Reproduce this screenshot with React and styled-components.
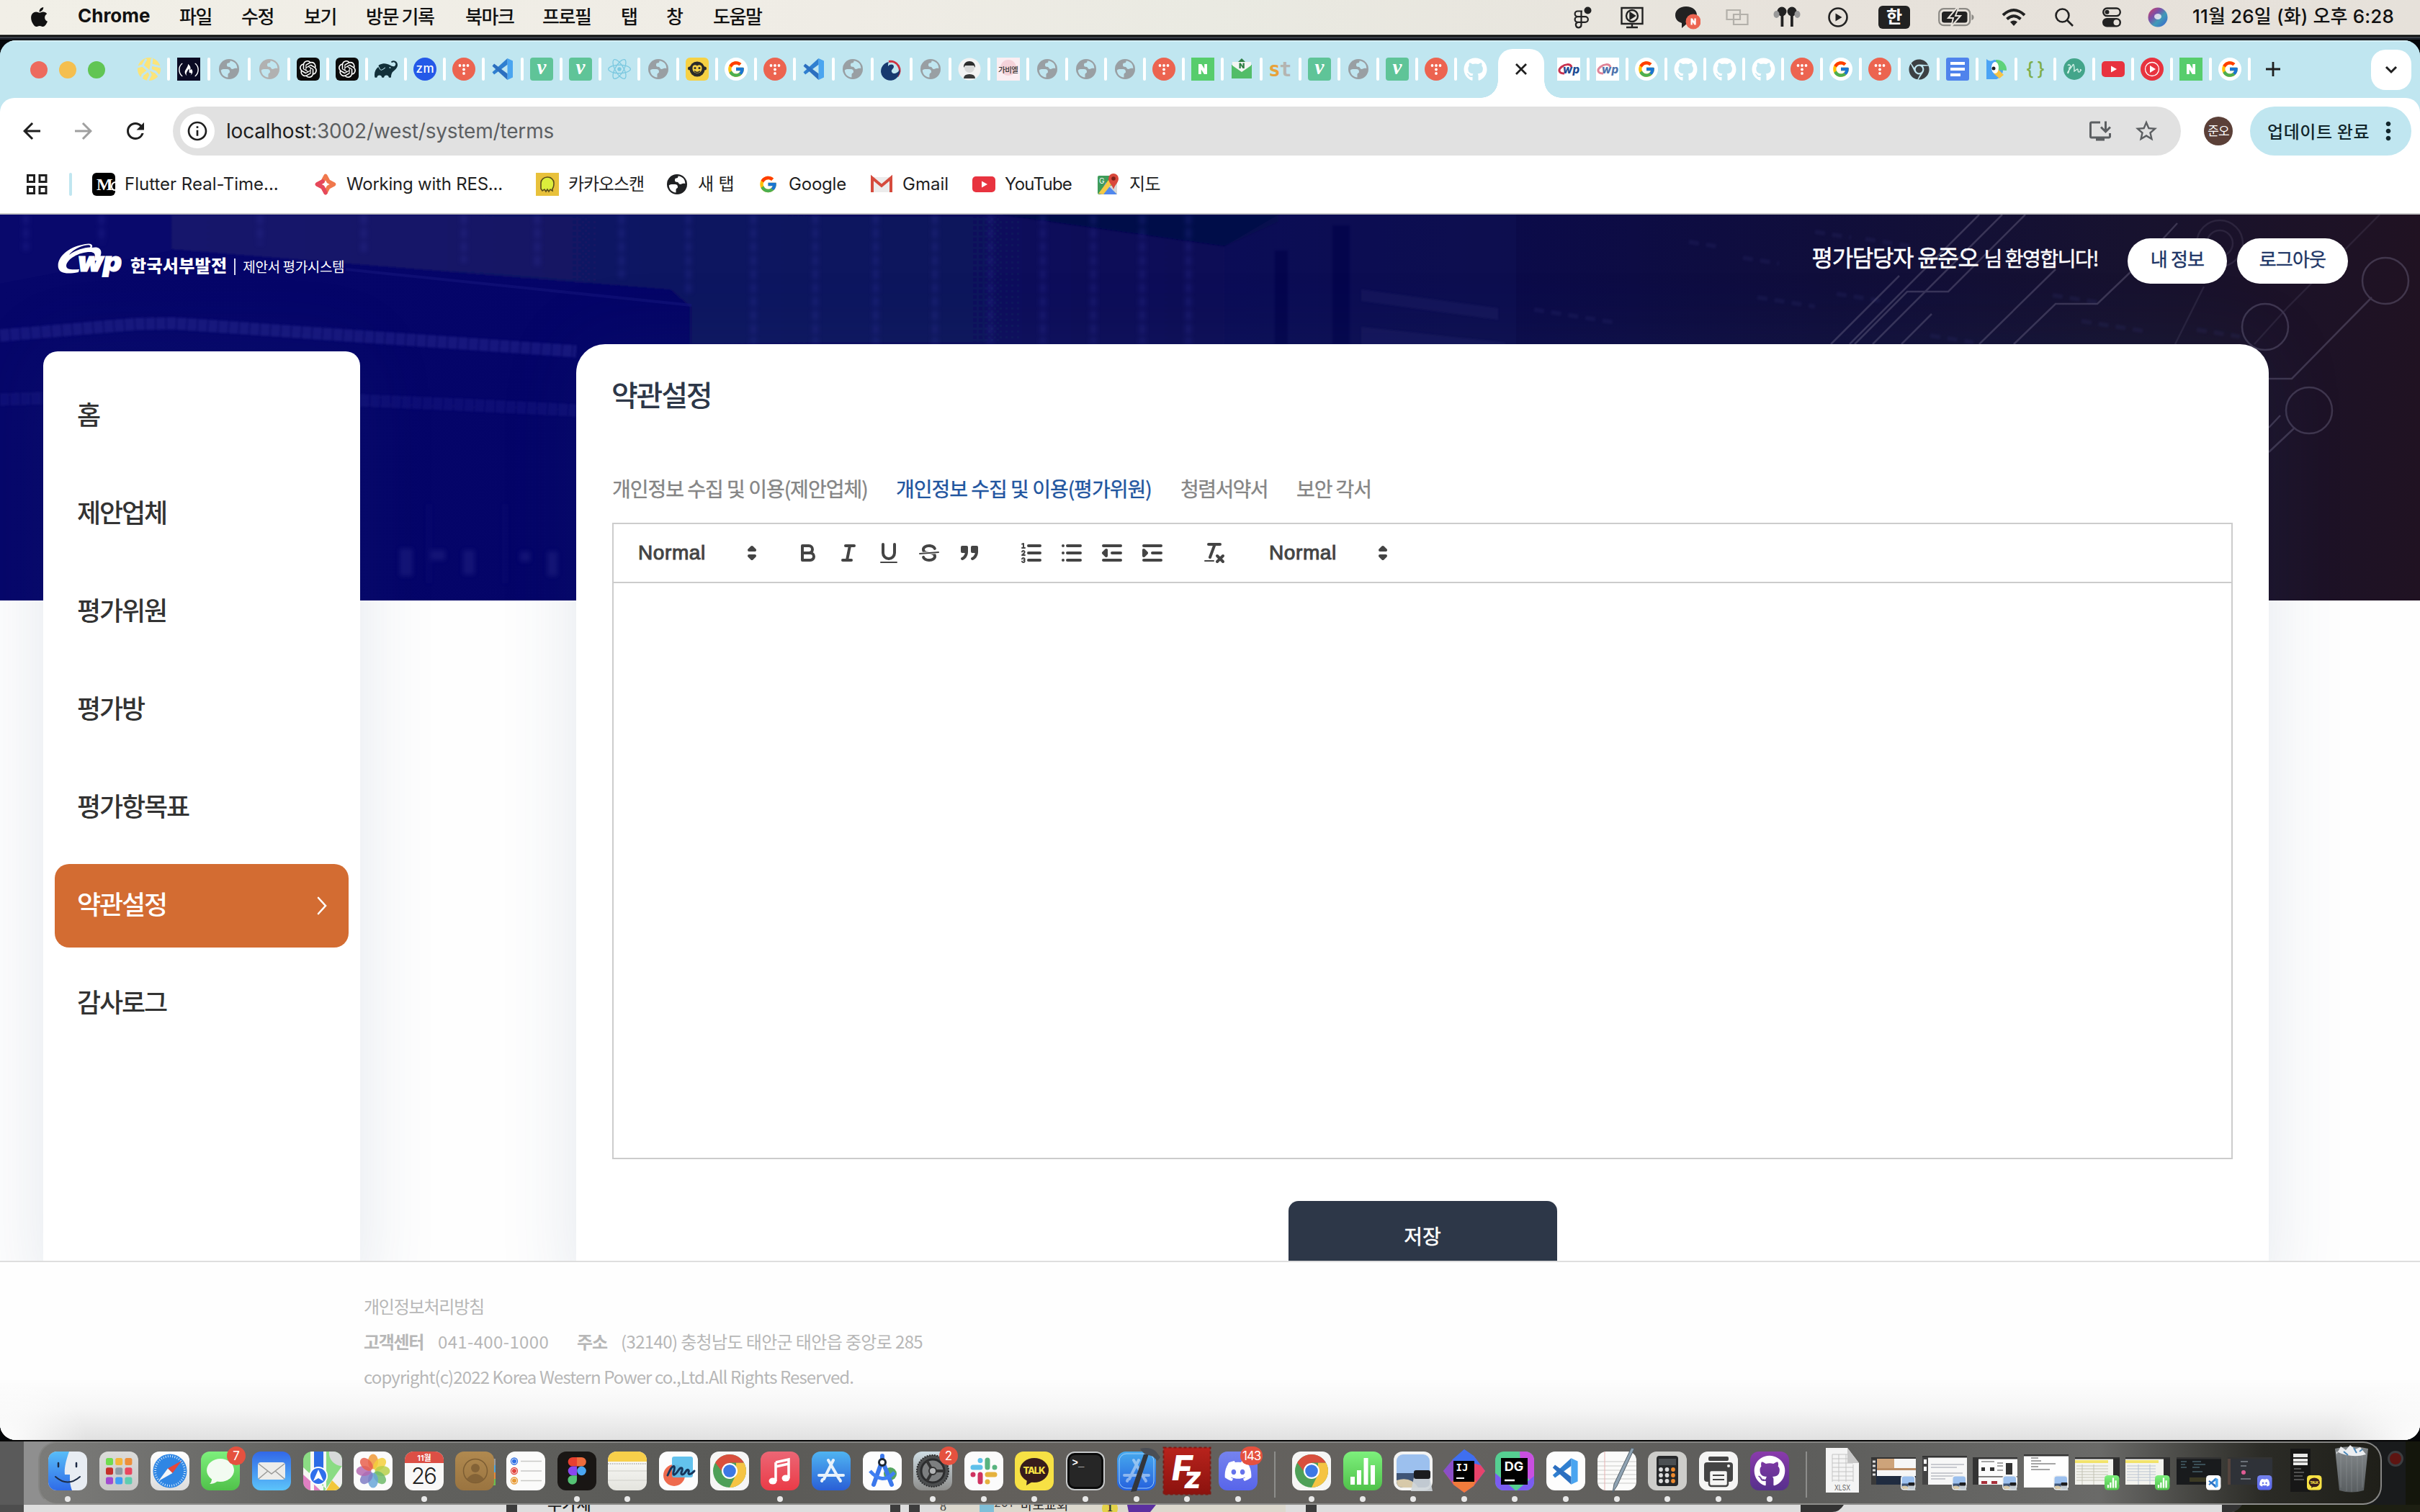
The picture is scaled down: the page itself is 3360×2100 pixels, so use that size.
import React from "react";
import styled, { createGlobalStyle } from "styled-components";
import { FaApple, FaGithub, FaReact, FaFreeCodeCamp, FaChrome, FaDiscord } from "react-icons/fa";
import { FcGoogle } from "react-icons/fc";
import { SiOpenai, SiGradle } from "react-icons/si";
import { MdArrowBack, MdArrowForward, MdRefresh, MdInfoOutline, MdStarBorder, MdOutlineInstallDesktop, MdMoreVert } from "react-icons/md";

const KR = '"Noto Sans CJK KR", sans-serif';
const UI = 'Inter, "Noto Sans CJK KR", sans-serif';

const GlobalStyle = createGlobalStyle`
  * { box-sizing: border-box; }
  body { margin: 0; width: 3360px; height: 2100px; overflow: hidden; background: #11151c; font-family: ${KR}; }
  svg { display: block; flex: none; }
`;

/* ───────────── desktop ───────────── */

const Desktop = styled.div`
  width: 3360px;
  height: 2100px;
  display: flex;
  flex-direction: column;
  background: #05070a;
`;

const MenuBar = styled.header`
  height: 48px;
  display: flex;
  align-items: center;
  justify-content: space-between;
  padding: 0 36px 0 39px;
  background: linear-gradient(90deg, #f1efe7 0%, #efece5 35%, #eaeae2 50%, #e7e2db 75%, #e6e1da 100%);
  color: #111;
`;

const MenuGroup = styled.div`
  display: flex;
  align-items: center;
`;

const MenuItem = styled.span`
  width: ${(p) => p.$w}px;
  white-space: nowrap;
  padding-bottom: ${(p) => (p.$icon ? 2 : 4)}px;
  font: ${(p) => (p.$bold ? 700 : 500)} 26px/44px ${(p) => (p.$bold ? UI : KR)};
  letter-spacing: ${(p) => (p.$bold ? 0 : "-1.4px")};
`;

const StatusCell = styled.div`
  display: flex;
  align-items: center;
  justify-content: center;
  width: ${(p) => p.$w}px;
  height: 40px;
  margin-left: ${(p) => p.$gap}px;
`;

const InputBadge = styled.div`
  width: 44px;
  height: 32px;
  border-radius: 6px;
  background: #222;
  color: #fff;
  text-align: center;
  font: 700 24px/28px ${KR};
`;

const Clock = styled.time`
  margin-left: 34px;
  width: 280px;
  padding-bottom: 3px;
  white-space: nowrap;
  text-align: right;
  font: 500 26px/44px ${UI};
  letter-spacing: 0.15px;
`;

const BehindEdge = styled.div`
  height: 8px;
  background: linear-gradient(180deg, #6b6f6b 0 1px, #050607 1px 3px, #565a5f 3px 4px, #20252e 4px 7px, #000 7px 8px);
`;

const WindowFrame = styled.main`
  height: 1944px;
  display: flex;
  flex-direction: column;
  border-radius: 22px;
  overflow: hidden;
  background: #c0e6f0;
`;

/* ───────────── browser tabs ───────────── */

const TabStrip = styled.div`
  height: 80px;
  display: flex;
  align-items: center;
  padding: 0 12px 0 42px;
  background: #c0e6f0;
  border-top: 2px solid #d3eef5;
`;

const TrafficLights = styled.div`
  display: flex;
  gap: 16px;
  width: 138px;
`;

const Light = styled.i`
  width: 24px;
  height: 24px;
  border-radius: 50%;
  background: ${(p) => p.$c};
`;

const Tab = styled.div`
  width: ${(p) => p.$w || 54}px;
  height: 32px;
  margin-bottom: 2px;
  display: flex;
  justify-content: center;
  align-items: center;
  position: relative;
  &::after {
    content: "";
    position: absolute;
    right: -2px;
    top: 0;
    width: 4px;
    height: 32px;
    border-radius: 2px;
    background: #fff;
    display: ${(p) => (p.$last ? "none" : "block")};
  }
`;

const ActiveTab = styled.div`
  width: 64px;
  height: 68px;
  margin: 0 7px 0 5px;
  align-self: flex-end;
  display: flex;
  justify-content: center;
  padding-top: 19px;
  border-radius: 20px 20px 0 0;
  background: #fff;
  position: relative;
  &::before, &::after {
    content: "";
    position: absolute;
    bottom: 0;
    width: 24px;
    height: 24px;
  }
  &::before { left: -24px; background: radial-gradient(circle at 0 0, transparent 23.5px, #fff 24px); }
  &::after { right: -24px; background: radial-gradient(circle at 100% 0, transparent 23.5px, #fff 24px); }
`;

const NewTab = styled.div`
  width: 66px;
  display: flex;
  justify-content: center;
  padding-bottom: 2px;
`;

const TabSearch = styled.button`
  margin-left: auto;
  width: 56px;
  height: 56px;
  padding: 0;
  border: 0;
  border-radius: 20px;
  background: #fff;
  display: flex;
  align-items: center;
  justify-content: center;
`;

/* ───────────── toolbar ───────────── */

const Chrome = styled.div`
  height: 162px;
  background: #fff;
  border-radius: 20px 20px 0 0;
  border-bottom: 2px solid #c9c9c9;
`;

const NavRow = styled.div`
  height: 92px;
  display: flex;
  align-items: center;
  padding: 0 12px 0 26px;
`;

const NavButton = styled.div`
  width: 36px;
  margin-right: 36px;
  display: flex;
  justify-content: center;
  color: ${(p) => (p.$off ? "#a0a0a0" : "#1f1f1f")};
`;

const Omnibox = styled.div`
  width: 2788px;
  height: 68px;
  margin-left: -2px;
  border-radius: 34px;
  background: #e1e1e1;
  display: flex;
  align-items: center;
  padding: 0 30px 0 10px;
`;

const SiteInfo = styled.div`
  width: 48px;
  height: 48px;
  border-radius: 50%;
  background: #fff;
  color: #1f1f1f;
  display: flex;
  align-items: center;
  justify-content: center;
`;

const Url = styled.div`
  flex: 1;
  margin-left: 16px;
  font: 400 28px/40px ${UI};
  letter-spacing: -0.18px;
  color: #5c5f62;
  b { font-weight: 400; color: #1f1f1f; }
`;

const OmniIcons = styled.div`
  display: flex;
  align-items: center;
  gap: 28px;
  color: #5c5f62;
`;

const Avatar = styled.div`
  width: 40px;
  height: 40px;
  margin-left: 32px;
  border-radius: 50%;
  background: #5b4038;
  color: #fff;
  text-align: center;
  font: 400 17px/37px ${KR};
  letter-spacing: -0.8px;
`;

const UpdatePill = styled.div`
  width: 224px;
  height: 68px;
  margin-left: 24px;
  padding: 0 12px 0 24px;
  border-radius: 34px;
  background: #c0e6f0;
  display: flex;
  align-items: center;
  justify-content: space-between;
  white-space: nowrap;
  font: 500 24px/64px ${KR};
  letter-spacing: 0.6px;
  color: #13272d;
`;

const BookmarkRow = styled.div`
  height: 56px;
  display: flex;
  align-items: center;
  padding-left: 37px;
  color: #1f1f1f;
`;

const BookmarkDivider = styled.i`
  width: 4px;
  height: 32px;
  margin: 0 28px 0 30px;
  border-radius: 2px;
  background: #c0e6f0;
`;

const Bookmark = styled.div`
  width: ${(p) => p.$w}px;
  display: flex;
  align-items: center;
  gap: 13px;
  white-space: nowrap;
  font: 400 24px/40px ${UI};
  letter-spacing: ${(p) => p.$ls || 0}px;
`;

/* ───────────── web page ───────────── */

const Page = styled.div`
  height: 1702px;
  position: relative;
  overflow: hidden;
  background: #fefefe;
  display: flex;
  flex-direction: column;
`;

const BannerArt = styled.svg`
  position: absolute;
  left: 0;
  top: 0;
`;

const PageHeader = styled.div`
  position: relative;
  z-index: 1;
  height: 180px;
  flex: none;
  display: flex;
  justify-content: space-between;
  align-items: flex-start;
  padding: 33px 100px 0 79px;
`;

const Brand = styled.div`
  display: flex;
  align-items: center;
  padding-top: 6px;
  color: #fff;
`;

const BrandName = styled.strong`
  margin-left: 12px;
  padding-top: 11px;
  font: 900 24px/40px ${KR};
  letter-spacing: 0.3px;
`;

const BrandRule = styled.i`
  width: 2px;
  height: 23px;
  margin: 16px 10px 0 10px;
  background: #d8d8ee;
`;

const BrandSub = styled.span`
  padding-top: 14px;
  font: 400 19px/30px ${KR};
  letter-spacing: -0.35px;
`;

const Account = styled.div`
  display: flex;
  align-items: center;
`;

const Welcome = styled.p`
  margin: 0 41px 0 0;
  padding-bottom: 11px;
  color: #fff;
  white-space: nowrap;
  font: 400 32px/48px ${KR};
  letter-spacing: -1.3px;
  -webkit-text-stroke: 0.5px #fff;
  small { font-size: 28px; letter-spacing: -1.43px; margin-left: 8px; }
`;

const PillButton = styled.button`
  width: ${(p) => p.$w}px;
  height: 63px;
  margin-left: ${(p) => p.$ml || 0}px;
  padding: 0 0 7px;
  border: 0;
  border-radius: 32px;
  background: #fff;
  color: #1d3566;
  font: 400 26px/40px ${KR};
  letter-spacing: -0.8px;
  -webkit-text-stroke: 0.4px #1d3566;
`;

const Body = styled.div`
  position: relative;
  height: 1273px;
  flex: none;
  display: flex;
  align-items: stretch;
`;

const softShadow = "0 0 110px rgba(50, 80, 120, 0.13)";

const Sidebar = styled.nav`
  width: 440px;
  margin: 10px 0 -60px 60px;
  padding: 32px 16px;
  border-radius: 20px 20px 0 0;
  background: #fff;
  box-shadow: ${softShadow};
  display: flex;
  flex-direction: column;
  gap: 20px;
`;

const SideItem = styled.a`
  height: 116px;
  padding: 0 29px 8px 31px;
  border-radius: 20px;
  display: flex;
  align-items: center;
  justify-content: space-between;
  background: ${(p) => (p.$on ? "#d36c32" : "transparent")};
  color: ${(p) => (p.$on ? "#fff" : "#333")};
  font: 500 36px/50px ${KR};
  letter-spacing: -2.1px;
  svg { margin-top: 6px; }
`;

const Panel = styled.section`
  width: 2350px;
  margin: 0 0 -60px 300px;
  padding: 39px 50px 0;
  border-radius: 40px 40px 0 0;
  background: #fff;
  box-shadow: ${softShadow};
  display: flex;
  flex-direction: column;
`;

const Title = styled.h1`
  margin: 0 0 0 -1px;
  font: 500 40px/60px ${KR};
  letter-spacing: -2.2px;
  color: #2d3748;
`;

const TermTabs = styled.div`
  display: flex;
  margin-top: 81px;
  height: 40px;
  gap: 40px;
`;

const TermTab = styled.span`
  width: ${(p) => p.$w}px;
  white-space: nowrap;
  font: 400 28px/40px ${KR};
  letter-spacing: ${(p) => p.$ls}px;
  color: ${(p) => (p.$on ? "#1f559f" : "#858585")};
  -webkit-text-stroke: 0.4px currentColor;
`;

const EditorBar = styled.div`
  height: 84px;
  margin-top: 28px;
  padding: 0 16px;
  border: 2px solid #ccc;
  display: flex;
  align-items: center;
`;

const EditorArea = styled.div`
  height: 800px;
  flex: none;
  border: 2px solid #ccc;
  border-top: 0;
`;

const ToolGroup = styled.div`
  display: flex;
  margin-right: 30px;
`;

const ToolButton = styled.span`
  width: 56px;
  display: flex;
  justify-content: center;
  svg { width: 36px; height: 36px; }
`;

const Picker = styled.span`
  width: 196px;
  display: flex;
  align-items: center;
  justify-content: space-between;
  padding: 0 2px 0 18px;
  color: #444;
  font: 400 28px/40px "Liberation Sans", sans-serif;
  letter-spacing: 0.6px;
  -webkit-text-stroke: 1px #444;
  svg { width: 36px; height: 36px; }
`;

const QuillSvg = styled.svg.attrs({ viewBox: "0 0 18 18", width: 36, height: 36 })`
  fill: none;
  stroke: #444;
  stroke-width: 2;
  stroke-linecap: round;
  stroke-linejoin: round;
  .f { fill: #444; stroke: none; }
  .fs { fill: #444; }
  .t { stroke-width: 1; }
`;

const SaveButton = styled.button`
  width: 373px;
  height: 100px;
  flex: none;
  align-self: center;
  margin-top: 58px;
  padding: 0 0 4px;
  border: 0;
  border-radius: 14px;
  background: #2d3748;
  color: #fff;
  font: 400 28px/40px ${KR};
  -webkit-text-stroke: 0.5px #fff;
`;

const Footer = styled.footer`
  position: relative;
  z-index: 2;
  flex: 1;
  border-top: 2px solid #dedede;
  padding: 36px 0 0 505px;
  color: #b7b7b7;
  background:
    radial-gradient(ellipse 120px 90px at 0 100%, #fff 0, rgba(255,255,255,0) 100%),
    radial-gradient(ellipse 120px 90px at 100% 100%, #fff 0, rgba(255,255,255,0) 100%),
    linear-gradient(180deg, rgba(0,0,0,0) 160px, rgba(0,0,0,0.035) 205px, rgba(0,0,0,0.12) 250px), #fefefe;
  font: 400 24px/49px ${KR};
`;

const FootLine = styled.div`
  display: flex;
  height: 49px;
`;

const FootText = styled.span`
  width: ${(p) => p.$w || 700}px;
  white-space: nowrap;
  font-weight: ${(p) => (p.$bold ? 700 : 400)};
  letter-spacing: ${(p) => p.$ls}px;
`;

/* ───────────── dock ───────────── */

const DockZone = styled.div`
  height: 100px;
  border-top: 2px solid #060606;
  display: flex;
  flex-direction: column;
  background: linear-gradient(90deg, #5a5a5a 0 33px, #8f8f8f 33px 80px, #6a6a6a 80px 3250px, #191b1c 3250px 3340px, #14160c 3340px);
`;

const Dock = styled.div`
  width: 3254px;
  height: 88px;
  margin-left: 53px;
  padding: 0 5px 0 4px;
  border-radius: 26px;
  border: 2px solid #858583;
  border-bottom-color: #8d8d8b;
  background: linear-gradient(90deg, #7b7b79 0%, #62625f 12%, #5a5a57 30%, #625f5b 40%, #64625f 60%, #5d5d5b 75%, #6a6a68 88%, #2b2b26 95%, #1f1f19 100%);
  display: flex;
`;

const DockItem = styled.div`
  width: ${(p) => p.$w || 70.68}px;
  display: flex;
  flex-direction: column;
  align-items: center;
  position: relative;
  padding-top: 12px;
  svg { overflow: visible; }
  &::after {
    content: "";
    margin-top: 8px;
    width: 8px;
    height: 8px;
    border-radius: 50%;
    background: ${(p) => (p.$run ? "#e8e8e8" : "transparent")};
  }
`;

const DockBadge = styled.span`
  position: absolute;
  top: 5px;
  right: 1px;
  min-width: 26px;
  height: 26px;
  padding: 0 3px;
  border-radius: 13px;
  background: #e5513f;
  color: #fff;
  text-align: center;
  font: 400 17px/26px ${UI};
  letter-spacing: -1px;
`;

const DockRule = styled.i`
  width: 2px;
  height: 64px;
  margin: 12px 14.6px 0;
  background: #8d8d8b;
`;

const Knob = styled.i`
  position: absolute;
  left: 3315px;
  top: 2015px;
  width: 22px;
  height: 22px;
  border-radius: 50%;
  border: 3px solid #3b3d40;
  background: #5e1512;
`;

/* ───────────── favicons ───────────── */

const Svg = ({ s = 32, vb = 32, children }) => (
  <svg width={s} height={s} viewBox={`0 0 ${vb} ${vb}`}>{children}</svg>
);

const WhiteDisc = styled.span`
  width: 32px;
  height: 32px;
  border-radius: 50%;
  background: #fff;
  display: flex;
  align-items: center;
  justify-content: center;
`;

const VsMark = () => (
  <g>
    <path d="M22.5 1 30 4.5v23L22.5 31Z" fill="#4aa5f0" />
    <path d="M22.5 1 1.5 20.2l2.6 3.2L22.5 9.8Z" fill="#2f7fd0" />
    <path d="M22.5 31 1.5 11.8l2.6-3.2L22.5 22.2Z" fill="#2b6fc0" />
  </g>
);

const Cwp = ({ ring = "#c8324f", text = "#1f4c93", w = 32 }) => (
  <svg width={w} height={w} viewBox="0 0 32 32">
    <rect width="32" height="32" fill="#fff" />
    <path d="M10 22C2 22 1 17 6 13S18 8 20 13" fill="none" stroke={ring} strokeWidth="3" />
    <text x="8" y="22" fontFamily="Inter" fontWeight="800" fontStyle="italic" fontSize="15" textLength="23" fill={text}>wp</text>
  </svg>
);

const Globe = ({ c, bg = "#c0e6f0" }) => (
  <Svg>
    <circle cx="16" cy="16" r="14" fill={c} />
    <path d="M4.800 17.500C6.500 15.500 10 16 13 16c3 0 4 1.500 4 4 0 1.500-2.500 1.500-2.500 3.500v4C9 27 5 23 4.800 17.500Z" fill={bg} />
    <path d="M17.500 4.600c0 2-.5 2.900-2.500 2.900-2 0-2 1.500-2 3s1 2.300 3 2.300c2.500 0 2 3.200 4.500 3.200 2 0 2-2 6.800-1C27.500 9 23 5 17.500 4.600Z" fill={bg} />
  </Svg>
);

const favicons = {
  yellow: () => <Svg><circle cx="16" cy="16" r="16" fill="#fbe47a" /><path d="M12 2 7 11l-7 2M7 11l8 7-8 6-2 6M15 18l3 6-4 8M20 1l-1 9 13 3M19 10l-1 7 7 3 5 6" fill="none" stroke="#c0e6f0" strokeWidth="3" /></Svg>,
  fcc: () => <Svg><rect width="32" height="32" fill="#0a0a23" /><g transform="translate(2 3)"><FaFreeCodeCamp size={28} color="#fff" /></g></Svg>,
  globe: () => <Globe c="#999fa3" />,
  globeLight: () => <Globe c="#b1b1b1" />,
  gpt: () => <Svg><rect width="32" height="32" rx="6" fill="#0c0c0c" /><g transform="translate(4 4)"><SiOpenai size={24} color="#fff" /></g></Svg>,
  gradle: () => <SiGradle size={32} color="#12303a" />,
  zoom: () => <Svg><circle cx="16" cy="16" r="16" fill="#2459e8" /><text x="16" y="21" textAnchor="middle" fontFamily="Inter" fontWeight="500" fontSize="17" textLength="25" fill="#fff">zm</text></Svg>,
  tistory: () => <Svg><circle cx="16" cy="16" r="16" fill="#ec6450" />{[[10.5, 11], [16, 11], [21.5, 11], [16, 16.5], [16, 22]].map(([x, y]) => <circle key={x + y} cx={x} cy={y} r="1.9" fill="#fff" />)}</Svg>,
  vscode: () => <Svg><VsMark /></Svg>,
  velog: () => <Svg><rect width="32" height="32" rx="4" fill="#5fc498" /><text x="16" y="23" textAnchor="middle" fontFamily="Liberation Serif" fontStyle="italic" fontWeight="700" fontSize="29" fill="#fff">v</text></Svg>,
  react: () => <FaReact size={32} color="#7cc9e0" />,
  monkey: () => <Svg><rect width="32" height="32" rx="6" fill="#f6d144" /><circle cx="16" cy="16" r="10.500" fill="#2b2b2b" /><circle cx="5.500" cy="15" r="2.500" fill="#2b2b2b" /><circle cx="26.500" cy="15" r="2.500" fill="#2b2b2b" /><path d="M9.500 14c0-5 6.500-4 6.500-2 0-2 6.500-3 6.500 2 1 10-14 10-13 0Z" fill="#f6d144" /><circle cx="13" cy="14.500" r="1.500" fill="#2b2b2b" /><circle cx="19" cy="14.500" r="1.500" fill="#2b2b2b" /><path d="M12 18.500q4 4 8 0" stroke="#2b2b2b" strokeWidth="1.500" fill="none" /></Svg>,
  google: () => <WhiteDisc><FcGoogle size={26} /></WhiteDisc>,
  gov: () => <Svg><path d="M12 5.500A12.500 12.500 0 0 1 24 26" fill="none" stroke="#cf3140" strokeWidth="3" /><path d="M12 6A13 13 0 1 0 26 24c1-2 2-5 1-8-1 5-8 8-10.500 4.500C14 17 19 16 19 12.500c0-3.500-5-4-8-.5 0-2 0-4 1-6Z" fill="#17396f" /></Svg>,
  face: () => <Svg><circle cx="16" cy="16" r="15.500" fill="#f3f3f3" /><circle cx="16" cy="14" r="7" fill="#d9d9d9" /><path d="M8 14C7 2 25 2 24 14l-2-3H10Z" fill="#2c2c2c" /><path d="M8 29q0-6 8-6t8 6" fill="#3a3a3a" /></Svg>,
  gabia: () => <Svg><rect width="32" height="32" fill="#fbeef2" /><circle cx="16" cy="14" r="11" fill="#f5d3da" /><text x="16" y="21" textAnchor="middle" fontFamily="Noto Sans CJK KR" fontWeight="500" fontSize="10.500" textLength="28" fill="#333">가비엘</text></Svg>,
  naver: () => <Svg><rect width="32" height="32" fill="#57cd6c" /><path d="M10 23V9h4.200l4 6.600V9H22v14h-4.200l-4-6.600V23Z" fill="#fff" /></Svg>,
  mail: () => <Svg><path d="M2 10h28v19H2Z" fill="#52bd68" /><path d="M9 8l7-7 7 7Z" fill="#2f8044" /><path d="M3 6h26v5L16 20 3 11Z" fill="#f3f5f3" /><path d="M12.500 15V7.500h2.300l2.700 4.300V7.500h2.300V15h-2.300l-2.700-4.300V15Z" fill="#2f8044" /></Svg>,
  st: () => <Svg><text x="-1" y="26" fontFamily="DejaVu Sans Mono" fontWeight="700" fontSize="28" fill="#e7a23a">s</text><text x="14.500" y="26" fontFamily="DejaVu Sans Mono" fontWeight="700" fontSize="28" fill="#b4b4b0">t</text></Svg>,
  github: () => <FaGithub size={33} color="#fff" />,
  cwp: () => <Cwp />,
  cwpLight: () => <Cwp ring="#e08397" text="#4f74ad" />,
  chrome: () => <FaChrome size={29} color="#3c4043" />,
  docs: () => <Svg><rect width="32" height="32" rx="3" fill="#4f83ec" /><path d="M6 8h20M6 16h20M6 24h14" stroke="#fff" strokeWidth="4" /></Svg>,
  bird: () => <Svg><path d="M2 2q5 5 11 1a14 14 0 0 1 3 27H2Z" fill="#4aa3f5" /><path d="M15 3a14 14 0 0 1 15 15l-13-1Z" fill="#5ed27a" /><path d="M16 14l10 10-6 5-8-7Z" fill="#f6c445" /><ellipse cx="14" cy="14" rx="5" ry="8" fill="#fff" /><circle cx="12" cy="15" r="2.500" fill="#222" /></Svg>,
  braces: () => <Svg><text x="16" y="25" textAnchor="middle" fontFamily="Inter" fontWeight="500" fontSize="26" textLength="27" fill="#7fae4c">{"{}"}</text></Svg>,
  mysql: () => <Svg><circle cx="16" cy="16" r="15" fill="#43a58a" /><path d="M7 11a2 2 0 1 1 2 3c0 8-3 9-2 6 2-4 6-7 7-10 2-3 2 8 2 9l4-3c2-1 0 5 3 4s0-6 3-2" fill="none" stroke="#d9f3ea" strokeWidth="1.300" /></Svg>,
  youtube: () => <Svg><rect y="5" width="32" height="22" rx="5" fill="#e8333f" /><path d="M13 11.500v9l8-4.500Z" fill="#fff" /></Svg>,
  ytmusic: () => <Svg><circle cx="16" cy="16" r="16" fill="#e8333f" /><circle cx="16" cy="16" r="9.500" fill="none" stroke="#fff" strokeWidth="1.300" /><path d="M13 11v10l8-5Z" fill="#fff" /></Svg>,
};

const Favicon = ({ kind }) => favicons[kind]();

const tabsBefore = "yellow fcc globe globeLight gpt gpt gradle zoom tistory vscode velog velog react globe monkey google tistory vscode globe gov globe face gabia globe globe globe tistory naver mail st velog globe velog tistory github".split(" ");
const tabsAfter = "cwp cwpLight google github github github tistory google tistory chrome docs bird braces mysql youtube ytmusic naver google".split(" ");
const firstWidths = [54, 56, 56, 55];

/* ───────────── status icons ───────────── */

const statusIcons = [
  [28, 0, <svg width="28" height="34" viewBox="0 0 28 34"><g fill="none" stroke="#222" strokeWidth="2.200"><path d="M14 8.500H7.500a3.800 3.800 0 0 0 0 7.700H18a3.800 3.800 0 1 1 0 7.700H7.500a3.800 3.800 0 0 1 0-7.700M7.500 23.900a3.800 3.800 0 1 0 5 3.700V8.500" /></g><circle cx="21.500" cy="7.500" r="5" fill="#222" /></svg>],
  [32, 39, <svg width="32" height="32" viewBox="0 0 32 32" fill="none" stroke="#222" strokeWidth="2.400"><path d="M1.500 3h29v22h-29ZM8 30h16M16 25v5" /><circle cx="16" cy="14" r="8" /><path d="M13.500 10v8l6-4Z" fill="#222" /></svg>],
  [36, 43, <svg width="36" height="34" viewBox="0 0 36 34"><path d="M16 2c9 0 15 5 15 12S25 26 17 26l-7 6 0-7C3 23 1 18 1 14 1 7 7 2 16 2Z" fill="#222" /><circle cx="26" cy="23" r="10.500" fill="#ec6450" /><path d="M22.500 27.500v-9h2.300l2.600 4.300v-4.300h2.300v9h-2.300l-2.600-4.300v4.300Z" fill="#fff" /></svg>],
  [32, 35, <svg width="32" height="26" viewBox="0 0 32 26" fill="none" stroke="#b3b0aa" strokeWidth="2.200"><path d="M1.500 3H20v13H1.500ZM11 9h19.500v14H11Z" /></svg>],
  [38, 34, <svg width="38" height="30" viewBox="0 0 38 30"><g fill="#222"><circle cx="12" cy="7" r="6.500" /><circle cx="26" cy="7" r="6.500" /><path d="M10.500 8h3.800v20h-3.800ZM24 8h3.800v20H24Z" /></g><ellipse cx="4.500" cy="11" rx="4" ry="5" fill="#999" /><ellipse cx="33.500" cy="11" rx="4" ry="5" fill="#999" /></svg>],
  [28, 38, <svg width="28" height="28" viewBox="0 0 28 28"><circle cx="14" cy="14" r="12.500" fill="none" stroke="#222" strokeWidth="2.600" /><path d="M10.500 8.500v11l9-5.500Z" fill="#222" /></svg>],
  [44, 42, <InputBadge>한</InputBadge>],
  [50, 39, <svg width="50" height="28" viewBox="0 0 50 28"><rect x="1.200" y="2.200" width="43" height="23" rx="6.500" fill="none" stroke="#8c8a85" strokeWidth="2.200" /><rect x="5" y="6" width="35.500" height="15.500" rx="3.500" fill="#222" /><path d="M46.500 10v8q3-1 3-4t-3-4Z" fill="#8c8a85" /><path d="M26 1 14 15h7l-3 12 13-15h-7l4-11Z" fill="#222" stroke="#e7e2db" strokeWidth="2" /></svg>],
  [34, 38, <svg width="34" height="26" viewBox="0 0 34 26" fill="none" stroke="#222" strokeWidth="4"><path d="M2 10q15-14 30 0M7.500 15.500q9.500-8.500 19 0" /><path d="M17 25l-5-5.500q5-4 10 0Z" fill="#222" stroke="none" /></svg>],
  [26, 40, <svg width="26" height="26" viewBox="0 0 26 26" fill="none" stroke="#222" strokeWidth="2.600"><circle cx="10.500" cy="10.500" r="9" /><path d="M17 17l8 8" /></svg>],
  [26, 40, <svg width="26" height="28" viewBox="0 0 26 28"><rect x="1.200" y="1.500" width="23.600" height="10.600" rx="5.300" fill="none" stroke="#222" strokeWidth="2.400" /><circle cx="6.500" cy="6.800" r="3" fill="#222" /><rect y="15" width="26" height="12.500" rx="6.200" fill="#222" /><circle cx="19.500" cy="21.200" r="4" fill="#e7e2db" /></svg>],
  [28, 37, <svg width="28" height="28" viewBox="0 0 28 28"><defs><linearGradient id="siri" x1="0" y1="0" x2="1" y2="1"><stop offset="0" stopColor="#d8405f" /><stop offset=".35" stopColor="#7a4fa8" /><stop offset=".6" stopColor="#3f9bb8" /><stop offset="1" stopColor="#3b5fd0" /></linearGradient></defs><circle cx="14" cy="14" r="13.500" fill="url(#siri)" /><ellipse cx="14" cy="13" rx="5" ry="4" fill="#fff" opacity=".75" /></svg>],
];

const menus = [["파일", 86], ["수정", 87], ["보기", 86], ["방문 기록", 138], ["북마크", 107], ["프로필", 109], ["탭", 63], ["창", 65], ["도움말", 80]];

/* ───────────── editor icons ───────────── */

const Line = ({ c, x1, x2, y1, y2 }) => <line className={c} x1={x1} x2={x2} y1={y1} y2={y2} />;

const quill = {
  bold: <><path d="M5,4H9.500A2.500,2.500,0,0,1,12,6.500v0A2.500,2.500,0,0,1,9.500,9H5Z" /><path d="M5,9h5.500A2.500,2.500,0,0,1,13,11.500v0A2.500,2.500,0,0,1,10.500,14H5Z" /></>,
  italic: <><Line x1={7} x2={13} y1={4} y2={4} /><Line x1={5} x2={11} y1={14} y2={14} /><Line x1={8} x2={10} y1={14} y2={4} /></>,
  underline: <><path d="M5,3V9a4.012,4.012,0,0,0,4,4H9a4.012,4.012,0,0,0,4-4V3" /><rect className="f" height="1" rx=".5" width="12" x="3" y="15" /></>,
  strike: <><Line c="t" x1={15.5} x2={2.5} y1={8.5} y2={9.5} /><path className="f" d="M9.007,8C6.542,7.791,6,7.519,6,6.500,6,5.792,7.283,5,9,5c1.571,0,2.765.679,2.969,1.309a1,1,0,0,0,1.900-.617C13.356,4.106,11.354,3,9,3,6.200,3,4,4.538,4,6.500a3.200,3.200,0,0,0,.5,1.843Z" /><path className="f" d="M8.984,10C11.457,10.208,12,10.479,12,11.500c0,.708-1.283,1.500-3,1.500-1.571,0-2.765-.679-2.969-1.309a1,1,0,1,0-1.900.617C4.644,13.894,6.646,15,9,15c2.800,0,5-1.538,5-3.500a3.200,3.200,0,0,0-.5-1.843Z" /></>,
  quote: <><rect className="fs" height="3" width="3" x="4" y="5" /><rect className="fs" height="3" width="3" x="11" y="5" /><path className="fs" d="M7,8c0,4.031-3,5-3,5" /><path className="fs" d="M14,8c0,4.031-3,5-3,5" /></>,
  ordered: <><Line x1={7} x2={15} y1={4} y2={4} /><Line x1={7} x2={15} y1={9} y2={9} /><Line x1={7} x2={15} y1={14} y2={14} /><Line c="t" x1={2.5} x2={4.5} y1={5.5} y2={5.5} /><path className="f" d="M3.500,6A.5.5,0,0,1,3,5.500V3.085l-.276.138A.5.5,0,0,1,2.053,3c-.124-.247-.023-.324.224-.447l1-.5A.5.5,0,0,1,4,2.500v3A.5.5,0,0,1,3.500,6Z" /><path className="t" d="M4.500,10.500h-2c0-.234,1.850-1.076,1.850-2.234A.959.959,0,0,0,2.500,8.156" /><path className="t" d="M2.500,14.846a.959.959,0,0,0,1.850-.109A.7.7,0,0,0,3.750,14a.688.688,0,0,0,.6-.736.959.959,0,0,0-1.850-.109" /></>,
  bullet: <>{[4, 9, 14].map((y) => <g key={y}><Line x1={6} x2={15} y1={y} y2={y} /><Line x1={3} x2={3.01} y1={y} y2={y} /></g>)}</>,
  outdent: <><Line x1={3} x2={15} y1={14} y2={14} /><Line x1={3} x2={15} y1={4} y2={4} /><Line x1={9} x2={15} y1={9} y2={9} /><polyline className="fs" points="5 7 5 11 3 9 5 7" /></>,
  indent: <><Line x1={3} x2={15} y1={14} y2={14} /><Line x1={3} x2={15} y1={4} y2={4} /><Line x1={9} x2={15} y1={9} y2={9} /><polyline className="fs" points="3 7 3 11 5 9 3 7" /></>,
  clean: <><Line x1={5} x2={13} y1={3} y2={3} /><Line x1={6} x2={9.35} y1={12} y2={3} /><Line x1={11} x2={15} y1={11} y2={15} /><Line x1={15} x2={11} y1={11} y2={15} /><rect className="f" height="1" rx=".5" width="7" x="2" y="14" /></>,
  picker: <><polygon className="fs" points="7 11 9 13 11 11 7 11" /><polygon className="fs" points="7 7 9 5 11 7 7 7" /></>,
};

const Tool = ({ name }) => <ToolButton><QuillSvg>{quill[name]}</QuillSvg></ToolButton>;
const SizePicker = () => <Picker>Normal<QuillSvg>{quill.picker}</QuillSvg></Picker>;

/* ───────────── banner ───────────── */

const columns = [[36, 50], [141, 40], [361, 42], [505, 54], [644, 67], [746, 76], [863, 88], [956, 110], [1046, 180], [1132, 180], [1216, 180], [1298, 180], [1375, 180], [1448, 180], [1518, 180], [1586, 180], [1650, 180]];

const windows = [[2345, 38, 40], [2420, 60, 50], [2520, 24, 50], [2590, 34, 70], [2130, 132, 110], [2440, 115, 80], [2550, 110, 60], [2850, 112, 70], [2680, 168, 60], [2890, 148, 90], [3050, 160, 60]];

const Banner = () => (
  <BannerArt width="3360" height="536" viewBox="0 0 3360 536">
    <defs>
      <linearGradient id="sky" x1="0" x2="1" y1="0" y2="0">
        <stop offset="0" stopColor="#06066a" />
        <stop offset=".25" stopColor="#040468" />
        <stop offset=".5" stopColor="#06075a" />
        <stop offset=".6" stopColor="#0a0a4c" />
        <stop offset=".75" stopColor="#100e3c" />
        <stop offset=".88" stopColor="#17122f" />
        <stop offset="1" stopColor="#201222" />
      </linearGradient>
      <linearGradient id="wall" x1="0" x2="1" y1="0" y2="0">
        <stop offset="0" stopColor="#12126c" />
        <stop offset="1" stopColor="#101156" />
      </linearGradient>
      <filter id="blur"><feGaussianBlur stdDeviation="3" /></filter>
      <filter id="soft"><feGaussianBlur stdDeviation="1.500" /></filter>
    </defs>
    <rect width="3360" height="536" fill="url(#sky)" />
    <path d="M0 0H238V50L0 96Z" fill="#09096c" />
    <path d="M238 0H1388L1700 44V180H958V128L930 104 238 48Z" fill="url(#wall)" filter="url(#soft)" />
    <path d="M1388 0H1775V10L1700 44Z" fill="#060748" filter="url(#soft)" />
    <path d="M1775 0H2105V180H1700V44Z" fill="#101154" opacity=".5" />
    <path d="M1770 50h18v130h-18zM1850 15h24v165h-24z" fill="#050548" opacity=".6" filter="url(#soft)" />
    <path d="M1890 156 2090 178v14H1890zM1890 104 2080 130v16L1890 120Z" fill="#1d1e62" opacity=".5" filter="url(#soft)" />
    <g stroke="#3535a0" strokeWidth="9" strokeDasharray="14 5" opacity=".26" filter="url(#blur)">
      {columns.map(([x, h]) => <path key={x} d={`M${x} 0V${h}`} />)}
    </g>
    <g fill="none" stroke="#22228a" strokeWidth="17" strokeDasharray="13 1.500" opacity=".62" filter="url(#soft)">
      <path d="M0 168 190 152 240 151 800 190" />
      <path d="M0 257 60 255M500 258 640 264 800 272" opacity=".6" />
    </g>
    <path d="M480 76 960 126" stroke="#14147a" strokeWidth="4" opacity=".6" />
    <g fill="#2a2a8a" opacity=".4" filter="url(#blur)">
      <path d="M555 464h18v38h-18zM598 466h20v14h-20zM643 466h16v34h-16zM722 468h14v14h-14zM760 468h14v34h-14z" />
      <path d="M594 402h3v110h-3zM700 402h3v110h-3z" opacity=".7" />
    </g>
    <g fill="none" stroke="#3d3d86" strokeWidth="6" strokeDasharray="14 10" opacity=".16" filter="url(#soft)">
      {windows.map(([x, y, w]) => <path key={x} d={`M${x} ${y}l${w} ${w * 0.16}`} />)}
    </g>
    <g fill="none" stroke="#7d7694" strokeWidth="2.500" opacity=".36">
      <path d="M2748 0 2568 180M2780 0 2600 180M2637 85 2542 180" />
      <path d="M2812 0 2705 107H2648L2575 180M2682 138 2640 180" />
      <path d="M3023 12 2990 48M2854 76 2748 180M2960 78 2912 124H2854L2796 180" />
      <path d="M3293 115 3182 228H3150M3185 297 3150 330M3166 279 3150 296" />
      <path d="M3304 0 3177 128 3130 180M3060 100 3020 180" opacity=".45" />
      <circle cx="3312" cy="92" r="32" />
      <circle cx="3145" cy="156" r="32" />
      <circle cx="3206" cy="272" r="32" />
      <circle cx="3082" cy="40" r="32" opacity=".5" />
      <circle cx="3082" cy="40" r="18" opacity=".5" />
    </g>
  </BannerArt>
);

const CwpLogo = () => (
  <svg width="90" height="50" viewBox="0 0 90 50">
    <path fillRule="evenodd" fill="#fff" d="M2 34C-1 20 16 3 44 .500c5 0 6 3 4.500 5.500C58 4 63 8 61 16c-1 4-3 5-4 8h-6c3-6 3-12-5-12C30 12 14 22 13 31c0 5 6 6 18 5l-1 4C14 43 4 42 2 34ZM17 16C26 9 38 6 46 5.500 48 2 44 1.500 38 3 29 5 20 11 17 16Z" />
    <text x="29" y="39" textLength="61" lengthAdjust="spacingAndGlyphs" fontFamily="Inter" fontStyle="italic" fontWeight="900" fontSize="38" fill="#fff" stroke="#fff" strokeWidth="1.200">wp</text>
  </svg>
);

/* ───────────── dock icons ───────────── */

const gradients = [
  ["dBlue", "#58bdf8", "#2f6be8"], ["dGrey", "#dcdcda", "#c9c9c8"], ["dSafari", "#ffffff", "#dcdcdc"],
  ["dGreen", "#7df07c", "#50c14a"], ["dMail", "#3268e8", "#5cc4fa"], ["dRed", "#ec6675", "#ea3b47"],
  ["dStore", "#4fb4f2", "#2a5fd6"], ["dNote", "#fdfdfb", "#e4e4de"], ["dSet", "#cfdde4", "#8d8d8b"],
  ["dPurple", "#7583ee", "#5865ea"], ["dGh", "#8a3bab", "#56308c"], ["dFz", "#b8231c", "#8b120e"],
  ["dTrash", "#8a8f92", "#5b6063"], ["dXc", "#46a9ee", "#2560dd"], ["dBrown", "#b0894f", "#9a7440"],
];

const Gradients = () => (
  <svg width="0" height="0">
    <defs>
      {gradients.map(([id, a, b]) => (
        <linearGradient key={id} id={id} x1="0" x2="0" y1="0" y2="1"><stop offset="0" stopColor={a} /><stop offset="1" stopColor={b} /></linearGradient>
      ))}
      <clipPath id="tile"><rect width="54" height="54" rx="12" /></clipPath>
    </defs>
  </svg>
);

const Tile = ({ fill, children }) => <><rect width="54" height="54" rx="12" fill={fill} />{children}</>;
const Clip = ({ children }) => <g clipPath="url(#tile)">{children}</g>;
const fsz = (n) => ({ fontFamily: "Inter, Noto Sans CJK KR", fontSize: n, textAnchor: "middle" });

const ChromeBall = () => (
  <g>
    <circle cx="27" cy="27" r="23" fill="#4ea058" />
    <path d="M46.900 15.500A23 23 0 0 1 27 50L36 32 36 15.500Z" fill="#f5c443" />
    <path d="M7.100 15.500A23 23 0 0 1 46.900 15.500H27L19 31Z" fill="#d94f3d" />
    <circle cx="27" cy="27" r="11" fill="#fff" />
    <circle cx="27" cy="27" r="8.800" fill="#3c78e4" />
  </g>
);

const petals = ["#f09a38", "#f3cf3b", "#b7cf49", "#6fba6a", "#67a6d8", "#7f7cc4", "#b46ab0", "#e7604d"];

const Compass = () => (
  <g stroke="#e8f2fb" strokeLinecap="round" strokeWidth="4" fill="none"><path d="M30 12 17 38M23 12 38 38M10 33H44" /><path d="M14 41l1-2M40 41l-1-2" /></g>
);

const dockArt = {
  finder: <><Tile fill="#e8edf3" /><Clip><path d="M0 0H29C24 14 22 24 23 32h7c0 8 0 14 3 22H0Z" fill="url(#dBlue)" /></Clip><path d="M14 16v5M39 16v5" stroke="#1c2b45" strokeWidth="2.500" strokeLinecap="round" /><path d="M10 35q17 15 34 0" fill="none" stroke="#1c2b45" strokeWidth="2" strokeLinecap="round" /></>,
  launchpad: <Tile fill="url(#dGrey)">{["#6fdc4f", "#f3b63c", "#ee8f3a", "#c4302b", "#8f9aa3", "#e9475f", "#a14ad0", "#3f9df5", "#5fcdb0"].map((c, i) => <rect key={c} x={9 + (i % 3) * 13.2} y={9 + Math.floor(i / 3) * 13.2} width="10" height="10" rx="2.500" fill={c} />)}</Tile>,
  safari: <Tile fill="url(#dSafari)"><circle cx="27" cy="27" r="23.500" fill="#2f86e4" /><circle cx="27" cy="27" r="20.500" fill="none" stroke="#cfe6fb" strokeWidth="3" strokeDasharray="1 2.200" /><path d="M43 13 30.500 30 24 23.500Z" fill="#e74638" /><path d="M11 41 24 23.500l6.500 6.500Z" fill="#f4f6f8" /></Tile>,
  messages: <Tile fill="url(#dGreen)"><ellipse cx="27" cy="26" rx="19" ry="16" fill="#f2fbf1" /><path d="M15 38q0 5-3 7 7 0 11-4Z" fill="#f2fbf1" /></Tile>,
  mail: <Tile fill="url(#dMail)"><rect x="8" y="15" width="38" height="24" rx="4" fill="#ececea" /><path d="M9 17 27 31 45 17M9 38 22 27M45 38 32 27" fill="none" stroke="#9a9a98" strokeWidth="1.500" /></Tile>,
  maps: <><Tile fill="#8bdc84" /><Clip><path d="M54 20 30 54H54Z" fill="#f0f0f0" /><path d="M36 0a18 18 0 0 0 18 20V0Z" fill="#d7dad9" /><path d="M0 30 24 54H0Z" fill="#e07fc2" /><path d="M0 22 34 54H24L0 32ZM10 0v54h5V0ZM28 0v54h4V0Z" fill="#f6f6f4" /><path d="M15 0h13v34H15Z" fill="#2b6be6" /><path d="M32 54 40 40 54 54Z" fill="#f2c73b" /></Clip><circle cx="21" cy="34" r="13" fill="#fff" /><circle cx="21" cy="34" r="11" fill="#2f6fec" /><path d="M21 25 28 41 21 37 14 41Z" fill="#fff" /></>,
  photos: <Tile fill="#fbfbfb">{petals.map((c, i) => <ellipse key={c} cx="27" cy="14" rx="7" ry="10.500" fill={c} opacity=".85" transform={`rotate(${i * 45} 27 27)`} />)}</Tile>,
  calendar: <><Tile fill="#f9f8f7" /><Clip><rect width="54" height="16" fill="#dc4f45" /></Clip><text x="27" y="13" {...fsz(11)} fontWeight="600" fill="#fff">11월</text><text x="27" y="45" {...fsz(31)} fontWeight="300" textLength="36" fill="#222">26</text></>,
  contacts: <><rect x="47" y="10" width="9" height="9" fill="#9b9b9b" /><rect x="47" y="19" width="9" height="10" fill="#4ea6dd" /><rect x="47" y="29" width="9" height="9" fill="#e8883a" /><rect x="47" y="38" width="9" height="9" fill="#6cbf4f" /><Tile fill="url(#dBrown)"><circle cx="28" cy="27" r="16.500" fill="none" stroke="#7c5d33" strokeWidth="1.500" /><circle cx="28" cy="23" r="6" fill="#846337" /><path d="M16 38q12-14 24 0-12 10-24 0Z" fill="#846337" /></Tile></>,
  reminders: <Tile fill="#fbfbfa">{[["#2f6fe4", 13.5], ["#e2453f", 27], ["#e89a33", 40.5]].map(([c, y]) => <g key={c}><circle cx="11" cy={y} r="4.500" fill="none" stroke={c} strokeWidth="1.300" /><circle cx="11" cy={y} r="3" fill={c} /><path d={`M20 ${y}h29`} stroke="#c9c9c7" strokeWidth="1.500" /></g>)}</Tile>,
  figma: <Tile fill="#191614"><path d="M27 8h-6a6.300 6.300 0 0 0 0 12.600h6Z" fill="#e8402f" /><path d="M27 8h6.500a6.300 6.300 0 0 1 0 12.600H27Z" fill="#ee6c3c" /><path d="M27 20.600h-6a6.300 6.300 0 0 0 0 12.600h6Z" fill="#8847ee" /><circle cx="33.500" cy="26.900" r="6.300" fill="#4aa6f2" /><path d="M27 33.200h-6a6.300 6.300 0 1 0 6 6.300Z" fill="#55c374" /></Tile>,
  notes: <><Tile fill="url(#dNote)" /><Clip><rect width="54" height="14" fill="#f7cf4a" /></Clip><path d="M0 17H54" stroke="#aaa" strokeWidth="1.500" strokeDasharray="1.500 1.500" /><path d="M0 27H54M0 40H54" stroke="#cfcfc9" /></>,
  freeform: <Tile fill="#fcfcfc"><circle cx="21" cy="33" r="15" fill="#ee6a4d" /><rect x="18" y="7" width="29" height="29" rx="3" fill="#56bdec" opacity=".92" /><path d="M12 33C19 16 24 18 20 29c-1 6 3 3 7-3s7-3 4 3c-1 4 3 4 6-1s5-2 4 1 3 4 8-2" fill="none" stroke="#16365c" strokeWidth="3" strokeLinecap="round" /></Tile>,
  chrome: <Tile fill="#f6f6f5"><ChromeBall /></Tile>,
  music: <Tile fill="url(#dRed)"><path d="M21 15 39 11V37M21 15V41M21 21 39 17" fill="none" stroke="#fff" strokeWidth="3.500" /><ellipse cx="17" cy="41" rx="5.500" ry="4.500" fill="#fff" /><ellipse cx="35" cy="37" rx="5.500" ry="4.500" fill="#fff" /></Tile>,
  appstore: <Tile fill="url(#dStore)"><Compass /></Tile>,
  studio: <Tile fill="#fdfdfd"><circle cx="38" cy="31" r="9" fill="#55a561" /><path d="M27 6v10M26 15 15 46M28 15 40 46" stroke="#3b78ec" strokeWidth="6" strokeLinecap="round" /><path d="M10 27q17 20 34 2" fill="none" stroke="#3f7ff2" strokeWidth="5" /><circle cx="27" cy="15" r="4.500" fill="#fff" stroke="#1d2733" strokeWidth="3" /></Tile>,
  settings: <Tile fill="url(#dSet)"><circle cx="27" cy="27" r="22" fill="#4b4d4e" stroke="#2b2c2d" strokeWidth="2" strokeDasharray="2 1.500" /><circle cx="27" cy="27" r="16" fill="#7d7f80" stroke="#2b2c2d" strokeWidth="3" /><path d="M27 27H43M27 27 19 13M27 27 19 41" stroke="#333" strokeWidth="4" /><circle cx="27" cy="27" r="5" fill="#b5b7b8" stroke="#333" strokeWidth="2" /></Tile>,
  slack: <Tile fill="#fbfbfb"><g strokeWidth="7" strokeLinecap="round"><path d="M12 22h10M22 12.500v.1" stroke="#5fc0e9" /><path d="M32 12v10M42 22v.1" stroke="#58b37f" /><path d="M32 32h10M32 42v.1" stroke="#e5b23e" /><path d="M22 32v10M12 32v.1" stroke="#cf3360" /></g></Tile>,
  kakao: <Tile fill="#f7e144"><ellipse cx="27" cy="26" rx="20" ry="17" fill="#371c1c" /><path d="M17 38l-1 9 10-6Z" fill="#371c1c" /><text x="27" y="31" {...fsz(13)} fontWeight="800" textLength="31" fill="#f7e144">TALK</text></Tile>,
  terminal: <Tile fill="#c7c9ca"><rect x="2" y="2" width="50" height="50" rx="10" fill="#0a0a0a" /><rect x="5" y="5" width="44" height="44" rx="7" fill="#262626" /><text x="17" y="20" fontFamily="Liberation Mono" fontWeight="700" fontSize="14" textAnchor="middle" fill="#fff">{">_"}</text></Tile>,
  xcode: <Tile fill="url(#dXc)"><rect x="3" y="3" width="48" height="48" rx="10" fill="none" stroke="#9fd0fb" strokeWidth="1" /><g opacity=".5"><Compass /></g><path d="M44 3 27 55 19 56 37 4Z" fill="#33363c" /><path d="M32-4q14-3 22 4l6 8-4 5-6-6-12-4q-4-3-6-7Z" fill="#4a4e55" /></Tile>,
  filezilla: <g><rect x="-5.500" y="-5.500" width="65" height="65" fill="url(#dFz)" stroke="#7e1b15" strokeWidth="2" strokeDasharray="4 3" /><text x="20" y="40" {...fsz(48)} fontWeight="800" fontStyle="italic" fill="#fff">F</text><text x="35" y="51" {...fsz(42)} fontWeight="800" fontStyle="italic" fill="#fff">z</text></g>,
  discord: <Tile fill="url(#dPurple)"><g transform="translate(7 7)"><FaDiscord size={40} color="#fff" /></g></Tile>,
  numbers: <Tile fill="url(#dGreen)"><path d="M13 46V35M22 46V26M31.500 46V9M41 46V19" stroke="#fff" strokeWidth="6" /></Tile>,
  preview: <><Tile fill="#f3f3f2" /><rect x="4" y="4" width="46" height="46" rx="9" fill="#9cc0ee" /><path d="M4 30h46v14q0 6-9 6H13q-9 0-9-9Z" fill="#3f5577" /><path d="M4 40q20-6 30 10H13q-9 0-9-9Z" fill="#d7c9a9" /><path d="M28 36h22l4 19H24Z" fill="#cfd6da" opacity=".9" /><rect x="28" y="26" width="23" height="12" rx="3" fill="#1b1c1f" /></>,
  intellij: <g><path d="M27-3 40 6 56 27 40 48 27 57 12 46-2 27 12 10Z" fill="#3f6ff0" /><path d="M27 10 40 6 56 27 40 48 27 57 12 46-2 27Z" fill="#e8436b" /><path d="M10 38 27 42 44 40 40 48 27 57 12 46Z" fill="#f07b3c" /><path d="M-2 27 12 10 20 30 10 42Z" fill="#8a4fc8" /><path d="M27-3 40 6 50 19 30 14 10 12Z" fill="#3f6ff0" /><rect x="12" y="13" width="29" height="29" fill="#000" /><text x="24" y="27" fontFamily="DejaVu Sans Mono" fontSize="14" textAnchor="middle" fontWeight="700" fill="#fff">IJ</text><path d="M16 37h11" stroke="#fff" strokeWidth="2" /></g>,
  datagrip: <><Tile fill="#55cf92" /><Clip><path d="M34 0H54V44L36 30Z" fill="#c94fe0" /><path d="M0 30 28 54H0ZM30 54 54 34V54Z" fill="#7a5cf0" /></Clip><rect x="8" y="9" width="37" height="37" fill="#000" /><text x="26" y="27" {...fsz(18)} fontWeight="700" fill="#fff">DG</text><path d="M13 40h14" stroke="#fff" strokeWidth="2.500" /></>,
  vscode: <Tile fill="#fdfdfd"><g transform="translate(7 8) scale(1.22)"><VsMark /></g></Tile>,
  textedit: <Tile fill="#fbfbfa"><path d="M0 14H54M0 20H54M0 26H54M0 32H54M0 38H54M0 44H54" stroke="#c9c9c7" /><path d="M10 0V54" stroke="#e7b1b1" /><path d="M47-5 51-4 27 48 21 57 23 45Z" fill="#8fa3b3" stroke="#54606a" /></Tile>,
  calculator: <Tile fill="#cdcdca"><rect x="12" y="6" width="30" height="42" rx="4" fill="#26282a" /><rect x="15" y="10" width="24" height="9" fill="#4b4f52" />{[24, 32, 40].map((y) => [18, 26.5, 35].map((x) => <circle key={x + y * 50} cx={x} cy={y + 1} r="2.900" fill={x === 35 ? "#ee8b2f" : "#dcdcdc"} />))}</Tile>,
  printer: <Tile fill="#f5f5f4"><rect x="13" y="7" width="28" height="6" rx="2" fill="#444" /><rect x="7" y="15" width="40" height="27" rx="4" fill="#444" /><rect x="14" y="26" width="26" height="22" rx="3" fill="#f5f5f4" stroke="#444" strokeWidth="2.500" /><path d="M19 33h16M19 39h16" stroke="#444" strokeWidth="2" /><circle cx="41" cy="20" r="2" fill="#f5f5f4" /></Tile>,
  github: <Tile fill="url(#dGh)"><g transform="translate(5 5)"><FaGithub size={44} color="#fff" /></g></Tile>,
  xlsx: <g><path d="M4-5H34L50 16V57H4Z" fill="#f4f4f4" /><path d="M34-5V16H50Z" fill="#c7c7c7" /><path d="M13 4H34M13 10H34M13 16H42M13 22H42M13 28H42M13 34H42M13 40H42M13 4V42M22 4V42M32 4V42M42 18V42" stroke="#c4c4c4" /><text x="27" y="54" {...fsz(11)} textLength="22" lengthAdjust="spacingAndGlyphs" fill="#666">XLSX</text></g>,
  trash: <g><path d="M4-4q23-6 46 0L44 54q-17 5-34 0Z" fill="url(#dTrash)" opacity=".95" /><path d="M12 0v50M20 1v54M27 2v54M35 1v54M42 0v50" stroke="#a9aeb1" strokeWidth="1" opacity=".3" /><path d="M6 4 12-7l7 5 6-7 7 6 7-3 8 10q-20 6-41-4Z" fill="#eceef0" /><path d="M16 0l6 5M30-5l4 7M38 0l4-3" stroke="#4b88b8" strokeWidth="2" /></g>,
};

const MiniApp = ({ kind, x = 24 }) => <g transform={`translate(${x} 33) scale(.38)`}>{dockArt[kind]}</g>;

const Thumb = ({ top = 8, fill, app, children }) => (
  <g>
    <g transform="translate(-4 0)">
      <rect y={top} width="62" height={46 - top} fill={fill} />
      <rect y={top} width="62" height="2.500" fill="#333" />
      {children}
    </g>
    <MiniApp kind={app} x={37} />
  </g>
);

const thumbs = [
  <Thumb fill="#202c40" app="preview"><path d="M8 10h24v13H8Z" fill="#cda37a" /><path d="M32 10h30v13H32ZM8 26h54v8H8Z" fill="#f6f6f6" /><path d="M8 23h54v3H8Z" fill="#b98b62" /><path d="M0 10h7v36H0Z" fill="#3a3a3a" /><path d="M2 14h4M2 20h4M2 26h4M2 32h4" stroke="#ddd" strokeWidth="3" /></Thumb>,
  <Thumb top={6} fill="#f7f7f7" app="preview"><path d="M0 8h8v38H0Z" fill="#444" /><path d="M2 14h4M2 24h4" stroke="#fff" strokeWidth="6" /><path d="M12 18h46M12 22h36M12 30h44M12 34h42M12 38h20" stroke="#b9bcc4" strokeWidth="1.300" /></Thumb>,
  <Thumb fill="#fbfbfb" app="preview"><path d="M0 10h8v36H0Z" fill="#333" /><path d="M12 14h18M34 16h8M34 20h8M34 26h8" stroke="#888" strokeWidth="1.300" /><path d="M12 22h5v5h-5ZM24 22h6v5h-6ZM46 16h9v16h-9Z" fill="#333" /><path d="M8 35h54" stroke="#555" strokeWidth="1.500" /><path d="M12 41h8v4h-8ZM26 41h8v4h-8Z" fill="#a8303a" /></Thumb>,
  <Thumb top={4} fill="#fefefe" app="preview"><rect y="30" width="62" height="20" fill="#fefefe" /><path d="M10 9h10M10 13h14M10 17h34M10 21h10M10 25h26" stroke="#888" strokeWidth="1.300" /></Thumb>,
  <Thumb fill="#f3f3ee" app="numbers"><path d="M0 12h46v4H0Z" fill="#f2e36b" /><path d="M53 10h9v36h-9Z" fill="#2c2c2c" /><path d="M2 20h44M2 24h44M2 28h44M2 32h44M2 36h44M2 40h44M10 18v28M26 18v28" stroke="#c3c3b5" /></Thumb>,
  <Thumb fill="#f3f3ee" app="numbers"><path d="M0 12h46v4H0Z" fill="#f2e36b" /><path d="M53 10h9v36h-9Z" fill="#2c2c2c" /><path d="M2 20h40M2 24h40M2 28h40M2 32h40M2 36h40M2 40h40M18 18v28M34 18v28" stroke="#b9c3d0" /></Thumb>,
  <Thumb fill="#191b1d" app="vscode"><path d="M6 14h8M6 18h6M6 22h8M22 14h12M24 18h16M22 22h10M22 28h14" stroke="#46606a" strokeWidth="1.300" /><path d="M18 36h24v6H18Z" fill="#3c3a24" /></Thumb>,
  <Thumb fill="#2f3238" app="discord"><path d="M0 10h4v36H0Z" fill="#55443e" /><circle cx="22" cy="29" r="3" fill="#e05c94" /><path d="M18 14h10M18 20h8M18 38h14" stroke="#80868f" strokeWidth="1.300" /></Thumb>,
  <g><rect x="13" y="-4" width="28" height="60" fill="#171717" /><path d="M17 3h20v5H17ZM17 10h20v4H17ZM17 15h20v4H17Z" fill="#e9e9e9" /><path d="M18 24h10M18 29h14M18 34h12M18 39h14" stroke="#8b8b8b" /><MiniApp kind="kakao" x={36} /></g>,
];

const dockMain = [["finder", 1], ["launchpad"], ["safari"], ["messages", 0, "7"], ["mail"], ["maps"], ["photos"], ["calendar", 1], ["contacts"], ["reminders"], ["figma", 1], ["notes", 1], ["freeform"], ["chrome"], ["music", 1], ["appstore"], ["studio"], ["settings", 1, "2"], ["slack", 1], ["kakao", 1], ["terminal", 1], ["xcode", 1], ["filezilla", 1], ["discord", 1, "143"]];
const dockOpen = ["chrome", "numbers", "preview", "intellij", "datagrip", "vscode", "textedit", "calculator", "printer", "github"];

const DockIcon = ({ art, run, badge }) => (
  <DockItem $run={run}>
    <Svg s={54} vb={54}>{art}</Svg>
    {badge && <DockBadge>{badge}</DockBadge>}
  </DockItem>
);

const Peek = () => (
  <svg width="3360" height="10" viewBox="0 0 3360 10">
    <rect width="3360" height="10" fill="#dedede" />
    <rect width="33" height="10" fill="#4d4d4d" />
    <path d="M703 0h15v10h-15zM1236 0h14v10h-14zM1262 0h15v10h-15zM1813 0h15v10h-15z" fill="#3c3c3c" />
    <rect x="1305" width="480" height="10" fill="#dcd8cd" />
    <path d="M1360 0h20v10h-20z" fill="#7fbfd8" />
    <circle cx="1541" cy="5" r="11" fill="#e3d24a" />
    <path d="M1565 0h40l-8 10h-30Z" fill="#5c2fa0" />
    <text x="760" y="7" fontFamily="Noto Sans CJK KR" fontWeight="500" fontSize="22" fill="#222">부가세</text>
    <text x="1305" y="8" fontFamily="Liberation Serif" fontSize="18" fill="#444">8</text>
    <text x="1380" y="3" fontFamily="Inter" fontSize="16" fill="#444">201</text>
    <text x="1417" y="7" fontFamily="Noto Sans CJK KR" fontSize="18" fill="#222">마포교회</text>
    <text x="1537" y="9" fontFamily="Liberation Serif" fontWeight="700" fontSize="16" fill="#333">1</text>
    <path d="M2500 0h60q-6 10-16 10h-44zM3085 0h30q-6 10-16 10h-14z" fill="#333" />
    <path d="M3113 0H3360V10H3100q8-2 13-10Z" fill="#1d1f12" />
  </svg>
);

const MediumMark = () => <Svg><rect width="32" height="32" rx="6" fill="#000" /><text x="6" y="24" fontFamily="Liberation Serif" fontWeight="700" fontSize="24" fill="#fff">M</text><path d="M32 13q-5 1-5 6t5 5" fill="none" stroke="#fff" strokeWidth="2" /></Svg>;
const SparkMark = () => <Svg><path d="M16 4.500 20 12 27.500 16 20 20 16 27.500 12 20 4.500 16 12 12Z" fill="none" stroke="#f0784c" strokeWidth="5.500" strokeLinejoin="round" /><path d="M12 12 4.500 16 12 20 16 27.500" fill="none" stroke="#e6485c" strokeWidth="5.500" strokeLinejoin="round" strokeLinecap="round" /></Svg>;
const KakaoScan = () => <Svg><rect width="32" height="32" fill="#e8c13b" /><path d="M7 22c0-3 0-4 0-8a9 8 0 0 1 18 0c0 4 0 6-2 8v3l-3-2-2 3-2-3-2 3-2-3-3 2Z" fill="#dcee3c" stroke="#5b4d1b" strokeWidth="1.600" /></Svg>;
const GmailMark = () => <Svg><path d="M2 6h28v21H2Z" fill="#ececec" /><path d="M3 27V7l13 11L29 7v20" fill="none" stroke="#d54b3d" strokeWidth="4" /></Svg>;
const MapMark = () => <Svg><rect x="1" y="4" width="27" height="26" rx="2" fill="#3f9c5a" /><path d="M12 13 28 30H5Z" fill="#5087ee" /><path d="M2 29 16 10l5 5L9 30Z" fill="#f5c945" /><path d="M28 14v16L17 19Z" fill="#d8d8d8" /><text x="3" y="15" fontFamily="Inter" fontSize="10" fill="#fff">G</text><path d="M23 1a7 7 0 0 1 7 7c0 6-5 8-7 15-2-7-7-9-7-15a7 7 0 0 1 7-7Z" fill="#d9483b" /><circle cx="23" cy="8" r="2.800" fill="#7c211a" /></Svg>;
const GoogleMark = () => <Svg><g transform="translate(3 2.500)"><FcGoogle size={27} /></g></Svg>;
const AppsMark = () => <svg width="29" height="28" viewBox="0 0 29 28" fill="none" stroke="#1f1f1f" strokeWidth="3"><path d="M1.500 1.500h9v9h-9ZM18 1.500h9v9h-9ZM1.500 17.500h9v9h-9ZM18 17.500h9v9h-9Z" /></svg>;

const bookmarks = [
  [<MediumMark />, "Flutter Real-Time...", 308, 0],
  [<SparkMark />, "Working with RES...", 308, -0.22],
  [<KakaoScan />, "카카오스캔", 180, -1.1],
  [<Globe c="#1f2022" bg="#fff" />, "새 탭", 126, -0.2],
  [<GoogleMark />, "Google", 158, -0.2],
  [<GmailMark />, "Gmail", 142, 0],
  [<Favicon kind="youtube" />, "YouTube", 173, -0.77],
  [<MapMark />, "지도", 90, -0.6],
];

const sideMenu = ["홈", "제안업체", "평가위원", "평가방", "평가항목표", "약관설정", "감사로그"];

export default function App() {
  return (
    <Desktop>
      <GlobalStyle />
      <Gradients />
      <MenuBar>
        <MenuGroup>
          <MenuItem $icon $w={69}><FaApple size={31} /></MenuItem>
          <MenuItem $bold $w={141}>Chrome</MenuItem>
          {menus.map(([t, w]) => <MenuItem key={t} $w={w}>{t}</MenuItem>)}
        </MenuGroup>
        <MenuGroup>
          {statusIcons.map(([w, gap, icon], i) => <StatusCell key={i} $w={w} $gap={gap}>{icon}</StatusCell>)}
          <Clock>11월 26일 (화) 오후 6:28</Clock>
        </MenuGroup>
      </MenuBar>
      <BehindEdge />
      <WindowFrame>
        <TabStrip>
          <TrafficLights><Light $c="#ed6a5e" /><Light $c="#f4bf4f" /><Light $c="#61c554" /></TrafficLights>
          {tabsBefore.map((k, i) => <Tab key={i} $w={firstWidths[i]} $last={i === tabsBefore.length - 1}><Favicon kind={k} /></Tab>)}
          <ActiveTab>
            <svg width="18" height="18" viewBox="0 0 18 18" stroke="#1f1f1f" strokeWidth="2.800"><path d="M2 2 16 16M16 2 2 16" /></svg>
          </ActiveTab>
          {tabsAfter.map((k, i) => <Tab key={i}><Favicon kind={k} /></Tab>)}
          <NewTab><svg width="22" height="22" viewBox="0 0 22 22" stroke="#1f1f1f" strokeWidth="2.800"><path d="M11 1v20M1 11h20" /></svg></NewTab>
          <TabSearch><svg width="18" height="12" viewBox="0 0 18 12" fill="none" stroke="#1f1f1f" strokeWidth="3"><path d="M2 2l7 7 7-7" /></svg></TabSearch>
        </TabStrip>
        <Chrome>
          <NavRow>
            <NavButton><MdArrowBack size={36} /></NavButton>
            <NavButton $off><MdArrowForward size={36} /></NavButton>
            <NavButton><MdRefresh size={36} /></NavButton>
            <Omnibox>
              <SiteInfo><MdInfoOutline size={32} /></SiteInfo>
              <Url><b>localhost</b>:3002/west/system/terms</Url>
              <OmniIcons><MdOutlineInstallDesktop size={36} /><MdStarBorder size={36} /></OmniIcons>
            </Omnibox>
            <Avatar>준오</Avatar>
            <UpdatePill>업데이트 완료<MdMoreVert size={40} /></UpdatePill>
          </NavRow>
          <BookmarkRow>
            <AppsMark />
            <BookmarkDivider />
            {bookmarks.map(([icon, t, w, ls]) => <Bookmark key={t} $w={w} $ls={ls}>{icon}{t}</Bookmark>)}
          </BookmarkRow>
        </Chrome>
        <Page>
          <Banner />
          <PageHeader>
            <Brand>
              <CwpLogo />
              <BrandName>한국서부발전</BrandName>
              <BrandRule />
              <BrandSub>제안서 평가시스템</BrandSub>
            </Brand>
            <Account>
              <Welcome>평가담당자 윤준오<small>님 환영합니다!</small></Welcome>
              <PillButton $w={138}>내 정보</PillButton>
              <PillButton $w={154} $ml={14}>로그아웃</PillButton>
            </Account>
          </PageHeader>
          <Body>
            <Sidebar>
              {sideMenu.map((t) => (
                <SideItem key={t} $on={t === "약관설정"}>
                  {t}
                  {t === "약관설정" && <svg width="16" height="28" viewBox="0 0 16 28" fill="none" stroke="#fff" strokeWidth="2.600" strokeLinecap="round"><path d="M3 4l10 11L3 26" /></svg>}
                </SideItem>
              ))}
            </Sidebar>
            <Panel>
              <Title>약관설정</Title>
              <TermTabs>
                <TermTab $w={354} $ls={-1}>개인정보 수집 및 이용(제안업체)</TermTab>
                <TermTab $w={355} $ls={-1} $on>개인정보 수집 및 이용(평가위원)</TermTab>
                <TermTab $w={121} $ls={-1.56}>청렴서약서</TermTab>
                <TermTab $w={104} $ls={-1.06}>보안 각서</TermTab>
              </TermTabs>
              <EditorBar>
                <ToolGroup><SizePicker /></ToolGroup>
                <ToolGroup>{["bold", "italic", "underline", "strike", "quote"].map((n) => <Tool key={n} name={n} />)}</ToolGroup>
                <ToolGroup>{["ordered", "bullet", "outdent", "indent"].map((n) => <Tool key={n} name={n} />)}</ToolGroup>
                <ToolGroup><Tool name="clean" /></ToolGroup>
                <ToolGroup><SizePicker /></ToolGroup>
              </EditorBar>
              <EditorArea />
              <SaveButton>저장</SaveButton>
            </Panel>
          </Body>
          <Footer>
            <FootLine><FootText $ls={-1.21}>개인정보처리방침</FootText></FootLine>
            <FootLine>
              <FootText $bold $w={103} $ls={-1.33}>고객센터</FootText>
              <FootText $w={193} $ls={0.35}>041-400-1000</FootText>
              <FootText $bold $w={61} $ls={-1.1}>주소</FootText>
              <FootText $ls={-0.63}>(32140) 충청남도 태안군 태안읍 중앙로 285</FootText>
            </FootLine>
            <FootLine><FootText $ls={-0.89}>copyright(c)2022 Korea Western Power co.,Ltd.All Rights Reserved.</FootText></FootLine>
          </Footer>
        </Page>
      </WindowFrame>
      <DockZone>
        <Dock>
          {dockMain.map(([k, run, badge]) => <DockIcon key={k} art={dockArt[k]} run={run} badge={badge} />)}
          <DockRule />
          {dockOpen.map((k) => <DockIcon key={k} art={dockArt[k]} run />)}
          <DockRule />
          <DockIcon art={dockArt.xlsx} />
          {thumbs.map((t, i) => <DockIcon key={i} art={t} />)}
          <DockIcon art={dockArt.trash} />
        </Dock>
        <Peek />
      </DockZone>
      <Knob />
    </Desktop>
  );
}
